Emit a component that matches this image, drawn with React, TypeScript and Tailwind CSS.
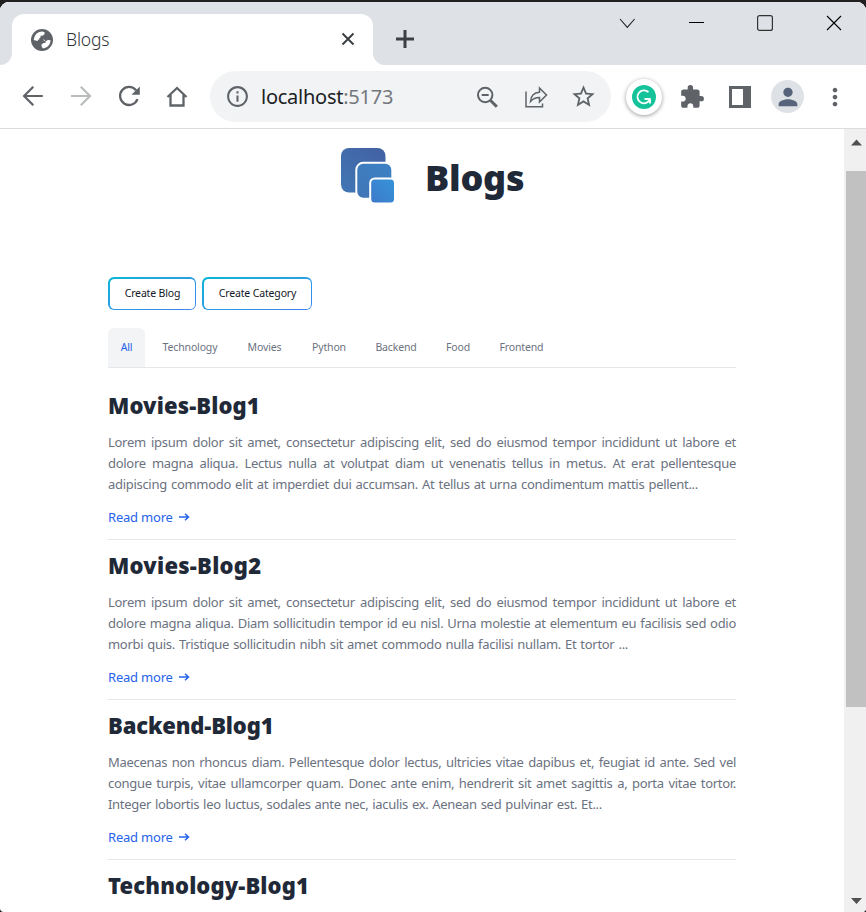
import { MdOutlineInfo, MdExtension, MdPerson, MdStarBorder, MdMoreVert } from "react-icons/md";

const tabs = [
  { name: "Technology", box: "w-[78px]" },
  { name: "Movies", box: "w-[59px]" },
  { name: "Python", box: "w-[58px]" },
  { name: "Backend", box: "w-[64px]" },
  { name: "Food", box: "w-[48px]" },
  { name: "Frontend", box: "w-[67px]" },
];

const posts = [
  {
    title: "Movies-Blog1",
    tracking: "tracking-[0.12px]",
    lines: [
      "Lorem ipsum dolor sit amet, consectetur adipiscing elit, sed do eiusmod tempor incididunt ut labore et",
      "dolore magna aliqua. Lectus nulla at volutpat diam ut venenatis tellus in metus. At erat pellentesque",
    ],
    last: "adipiscing commodo elit at imperdiet dui accumsan. At tellus at urna condimentum mattis pellent...",
    lastWidth: "w-[590px]",
  },
  {
    title: "Movies-Blog2",
    tracking: "tracking-[0.24px]",
    lines: [
      "Lorem ipsum dolor sit amet, consectetur adipiscing elit, sed do eiusmod tempor incididunt ut labore et",
      "dolore magna aliqua. Diam sollicitudin tempor id eu nisl. Urna molestie at elementum eu facilisis sed odio",
    ],
    last: "morbi quis. Tristique sollicitudin nibh sit amet commodo nulla facilisi nullam. Et tortor ...",
    lastWidth: "w-[520px]",
  },
  {
    title: "Backend-Blog1",
    tracking: "tracking-[-0.15px]",
    lines: [
      "Maecenas non rhoncus diam. Pellentesque dolor lectus, ultricies vitae dapibus et, feugiat id ante. Sed vel",
      "congue turpis, vitae ullamcorper quam. Donec ante enim, hendrerit sit amet sagittis a, porta vitae tortor.",
    ],
    last: "Integer lobortis leo luctus, sodales ante nec, iaculis ex. Aenean sed pulvinar est. Et...",
    lastWidth: "w-[494px]",
  },
];

function TabStrip() {
  return (
    <div className="flex h-[63px] items-start bg-[#dee1e6]">
      <div className="flex h-[63px] w-3 items-end bg-white">
        <div className="h-full w-full rounded-br-[12px] bg-[#dee1e6]" />
      </div>
      <div className="h-[63px] w-[361px] bg-[#dee1e6] pt-3">
        <div className="flex h-[51px] items-center rounded-t-[12px] bg-white pr-[17px] pl-[19px]">
          <svg className="size-[22px]" viewBox="0 0 22 22">
            <circle cx="11" cy="11" r="11" fill="#5f6368" />
            <path
              d="M3 10C3.500 5.500 7 2.600 11.300 2.500L13.500 3.200V5.200L11.500 6.800H9.500V8.500L8 9.500 8.500 10.500H13L14.500 12.200V14H12.500L10.500 15.500V17.300L12 19.400C16.500 19 19.500 15.500 19.500 11L18.500 11.300 16.800 10.800 15.500 12H13.500L12 10.500H7.500L6.500 12 2.600 11z"
              fill="#fff"
            />
          </svg>
          <span className="ml-[13px] text-[17.5px] font-light tracking-[-0.15px] text-[#2e3236]">Blogs</span>
          <svg className="ml-auto size-4" viewBox="0 0 16 16" fill="none" stroke="#3c4043" strokeWidth="2">
            <path d="M2.500 1.500l11 11M13.500 1.500l-11 11" />
          </svg>
        </div>
      </div>
      <div className="h-[63px] w-[493px] bg-white">
        <div className="flex h-full rounded-bl-[12px] bg-[#dee1e6]">
          <svg className="mt-[27px] ml-[22px] size-5" viewBox="0 0 20 20" fill="none" stroke="#3c4043" strokeWidth="3">
            <path d="M1 10h18M10 1v18" />
          </svg>
          <div className="mt-[12px] ml-[203px] flex h-[18px] items-center text-black">
            <svg className="h-[18px] w-[18px]" viewBox="0 0 18 18" fill="none" stroke="#222" strokeWidth="1.1">
              <path d="M2 5l7.300 8.300L16.600 5" />
            </svg>
            <svg className="ml-[52px] h-[18px] w-[17px]" viewBox="0 0 17 18" stroke="#000">
              <path d="M1 8.500h15" />
            </svg>
            <svg className="ml-[51px] h-[18px] w-[18px]" viewBox="0 0 18 18" fill="none" stroke="#333" strokeWidth="1.2">
              <rect x="1.600" y="1.600" width="14.800" height="14.800" rx="2" />
            </svg>
            <svg className="ml-[52px] h-[18px] w-[16px]" viewBox="0 0 16 18" fill="none" stroke="#000" strokeWidth="1.100">
              <path d="M1 2l14 14M15 2L1 16" />
            </svg>
          </div>
        </div>
      </div>
    </div>
  );
}

function Toolbar() {
  return (
    <div className="flex h-[64px] items-center border-b border-[#dadce0] bg-white pl-[20px]">
      <svg className="size-6" viewBox="0 0 24 24" fill="none" stroke="#5f6368" strokeWidth="2.200">
        <path d="M22.800 11H4.800M13.300 1.800L4.100 11l9.200 9.200" />
      </svg>
      <svg className="ml-6 size-6" viewBox="0 0 24 24" fill="none" stroke="#babcbe" strokeWidth="2.200">
        <path d="M3 11h18M12.800 1.800L22 11l-9.200 9.200" />
      </svg>
      <svg className="ml-6 size-6" viewBox="0 0 24 24" fill="none" stroke="#5f6368" strokeWidth="2.300">
        <path d="M21.500 14.200A9 9 0 1 1 20.100 5.300" />
        <path d="M23.800 1.500v8.200H15.500z" fill="#5f6368" stroke="none" />
      </svg>
      <svg className="ml-6 size-6" viewBox="0 0 24 24" fill="none" stroke="#5f6368" strokeWidth="2.300">
        <path d="M3.500 12L13 3l9.500 9M6.500 10v10.500h13v-10.500" />
      </svg>
      <div className="ml-[22px] flex h-[51px] w-[401px] items-center rounded-full bg-[#f1f3f4] pl-[15px]">
        <MdOutlineInfo className="size-[25px] text-[#5f6368]" />
        <span className="ml-[11px] text-[20px] tracking-[-0.25px] whitespace-nowrap text-[#202124]">
          localhost<span className="text-[#74787c]">:5173</span>
        </span>
        <div className="ml-auto flex items-center pr-[14px]">
          <svg className="size-6" viewBox="0 0 24 24" fill="none" stroke="#5f6368" strokeWidth="2">
            <circle cx="10.200" cy="10" r="7.200" />
            <path d="M6.700 10h7" strokeWidth="1.800" />
            <path d="M15.300 15.300l6.500 6.500" strokeWidth="3" />
          </svg>
          <svg className="ml-[25px] size-6" viewBox="0 0 24 24" fill="none" stroke="#5f6368" strokeWidth="1.500">
            <path d="M2 6.500V21.700H18.500V18.500" />
            <path d="M6.500 16.500C7 11 10 7.500 15.500 7.300V3l7 7-7 7v-4.500c-4 0-6.500 1-9 4z" />
          </svg>
          <MdStarBorder className="ml-[22px] size-[27px] text-[#5f6368]" />
        </div>
      </div>
      <div className="ml-[15px] flex size-9 items-center justify-center rounded-full bg-white shadow-[0_1px_4px_rgba(0,0,0,0.4)]">
        <svg className="size-6" viewBox="0 0 24 24" fill="none" stroke="#fff" strokeWidth="1.800">
          <circle cx="12" cy="12" r="12" fill="#15c39a" stroke="none" />
          <path d="M16.500 7.200A6.500 6.500 0 1 0 18 14.200M12.500 14h6M18 13.500v5" />
        </svg>
      </div>
      <MdExtension className="ml-[17px] size-[26px] text-[#5f6368]" />
      <svg className="ml-[24px] size-[22px]" viewBox="0 0 22 22">
        <path d="M0 0h22v22H0z" fill="#5f6368" />
        <path d="M3 3h11v16H3z" fill="#fff" />
      </svg>
      <div className="ml-[20px] flex size-[33px] items-center justify-center rounded-full bg-[#dee1e6]">
        <MdPerson className="size-[28px] text-[#56637a]" />
      </div>
      <MdMoreVert className="ml-[17px] size-[28px] text-[#5f6368]" />
    </div>
  );
}

function Logo() {
  return (
    <svg className="h-[56px] w-[54px]" viewBox="0 0 54 56">
      <defs>
        <linearGradient id="back" x1="1" y1="0" x2="0" y2="1">
          <stop stopColor="#4360a2" />
          <stop offset="1" stopColor="#4177b5" />
        </linearGradient>
        <linearGradient id="middle" x1="1" y1="0" x2="0" y2="1">
          <stop stopColor="#3b82c5" />
          <stop offset="1" stopColor="#4276b7" />
        </linearGradient>
        <linearGradient id="front" x1="1" y1="0" x2="0" y2="1">
          <stop stopColor="#3595d9" />
          <stop offset="1" stopColor="#3d78c9" />
        </linearGradient>
      </defs>
      <rect x="0" y="0" width="44.500" height="44.500" rx="8" fill="url(#back)" />
      <rect x="15.300" y="14.800" width="36" height="36" rx="7" fill="url(#middle)" stroke="#fff" strokeWidth="2" />
      <rect x="29.200" y="30.500" width="24.800" height="25" rx="4.500" fill="url(#front)" stroke="#fff" strokeWidth="2" />
    </svg>
  );
}

function OutlineButton({ label, width }: { label: string; width: string }) {
  return (
    <button className={`h-[33px] rounded-[6px] bg-linear-to-br from-[#06b6d4] to-[#3b82f6] p-[1.5px] ${width}`}>
      <span className="flex h-full items-center justify-center rounded-[4.5px] bg-white pl-px text-[10.5px] tracking-[-0.15px] whitespace-nowrap text-[#111827]">
        {label}
      </span>
    </button>
  );
}

function PostTitle({ title, tracking }: { title: string; tracking: string }) {
  return (
    <h2 className={`text-[22px] leading-8 font-black whitespace-nowrap text-[#1f2937] ${tracking}`}>{title}</h2>
  );
}

export default function App() {
  return (
    <div className="h-[912px] w-[866px] overflow-hidden bg-[#202020] pt-[2px] font-['Noto_Sans','Open_Sans',sans-serif]">
      <div className="flex h-[910px] flex-col overflow-hidden rounded-t-[9px] rounded-b-[4px] bg-white">
        <TabStrip />
        <Toolbar />
        <div className="flex min-h-0 flex-1">
          <main className="w-[844px] overflow-hidden pr-[108px] pl-[108px]">
            <header className="flex h-[148px] items-start pt-[19px] pl-[233px]">
              <Logo />
              <h1 className="ml-[30px] text-[36px] leading-[60px] font-black tracking-[-0.25px] text-[#1f2937]">Blogs</h1>
            </header>
            <div className="flex gap-[6px]">
              <OutlineButton label="Create Blog" width="w-[88px]" />
              <OutlineButton label="Create Category" width="w-[110px]" />
            </div>
            <nav className="mt-[18px] flex h-10 gap-[6px] border-b border-[#e5e7eb] text-[10.5px] tracking-[-0.15px] text-[#6b7280]">
              <div className="flex w-[37px] items-center justify-center rounded-t-[6px] bg-[#f3f4f6] text-[#2563eb]">All</div>
              {tabs.map((t) => (
                <div key={t.name} className={`flex items-center justify-center ${t.box}`}>
                  {t.name}
                </div>
              ))}
            </nav>
            <div className="pt-3">
              {posts.map((p) => (
                <article key={p.title} className="h-[160px] border-b border-[#e5e7eb] pt-[9px]">
                  <PostTitle title={p.title} tracking={p.tracking} />
                  <div className="mt-[11px] text-[13px] leading-[21px] tracking-[-0.3px] text-[#6b7280]">
                    {p.lines.map((l) => (
                      <p key={l} className="[text-align-last:justify]">
                        {l}
                      </p>
                    ))}
                    <p className={`[text-align-last:justify] ${p.lastWidth}`}>{p.last}</p>
                  </div>
                  <a className="mt-[13px] flex h-5 items-center text-[13px] tracking-[-0.2px] whitespace-nowrap text-[#2563eb]">
                    <span className="w-[70px]">Read more</span>
                    <svg className="h-3 w-3" viewBox="0 0 12 12" fill="none" stroke="currentColor" strokeWidth="1.500">
                      <path d="M1 5h9.500M7 1.700l3.500 3.300-3.500 3.300" />
                    </svg>
                  </a>
                </article>
              ))}
              <div className="pt-[9px]">
                <PostTitle title="Technology-Blog1" tracking="tracking-[0.12px]" />
              </div>
            </div>
          </main>
          <div className="flex w-[22px] flex-col items-end bg-[#f0f0f0]">
            <svg className="h-[42px] w-5" viewBox="0 0 20 42">
              <path d="M5 16.500l5.500-6 5.500 6z" fill="#505050" />
            </svg>
            <div className="h-[536px] w-5 bg-[#c1c1c1]" />
            <svg className="mt-auto h-6 w-5" viewBox="0 0 20 24">
              <path d="M5 10l5.500 6 5.500-6z" fill="#505050" />
            </svg>
          </div>
        </div>
      </div>
    </div>
  );
}
